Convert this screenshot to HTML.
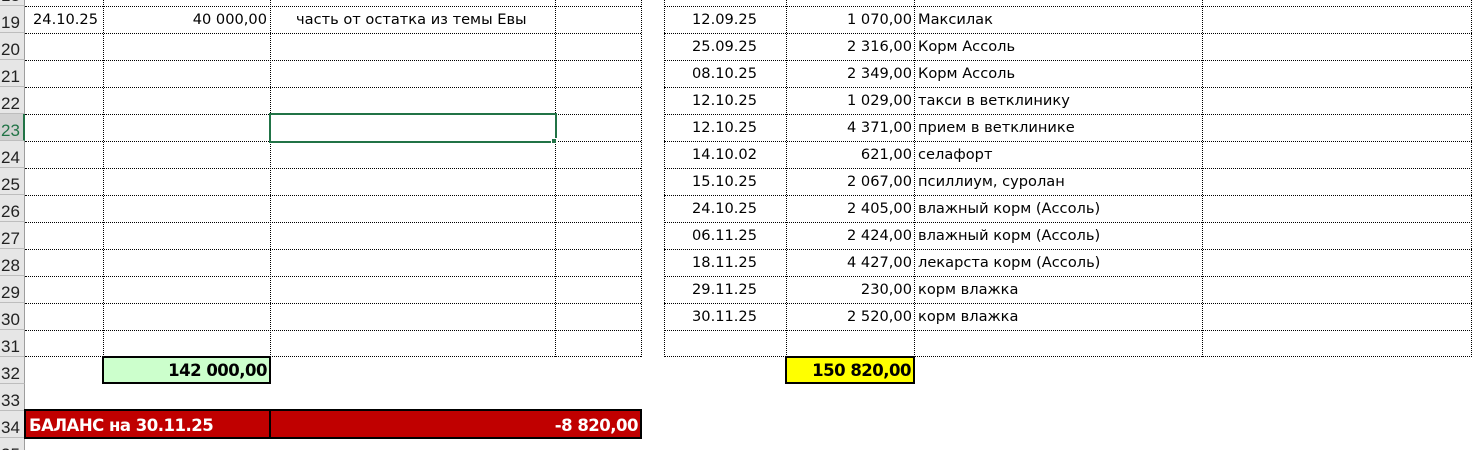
<!DOCTYPE html>
<html><head><meta charset="utf-8"><style>
html,body{margin:0;width:1482px;height:450px;overflow:hidden}
body{background:#fff;position:relative;font-family:"DejaVu Sans","Liberation Sans",sans-serif;font-size:14.6px;color:#000}
div{position:absolute;box-sizing:border-box}
.h{height:0;border-top:1px dotted #000}
.v{width:0;border-left:1px dotted #000}
.rh{left:0;width:25px;height:27px;background:#e6e6e6;border-bottom:1px solid #bdbdbd;border-right:1px solid #9e9e9e;font-family:"Liberation Sans",sans-serif;font-size:17px;color:#222;padding-left:1px;padding-top:6px;line-height:22px}
.t{height:27px;line-height:27px;white-space:nowrap}
.r{text-align:right}
.b{font-weight:bold;font-size:16.5px;font-family:"DejaVu Sans",sans-serif;letter-spacing:-0.5px}
</style></head><body>
<div class="rh" style="top:-21px">18</div>
<div class="rh" style="top:6px">19</div>
<div class="rh" style="top:33px">20</div>
<div class="rh" style="top:60px">21</div>
<div class="rh" style="top:87px">22</div>
<div class="rh" style="top:114px;background:#d2d2d2;color:#217346;border-right:2px solid #217346">23</div>
<div class="rh" style="top:141px">24</div>
<div class="rh" style="top:168px">25</div>
<div class="rh" style="top:195px">26</div>
<div class="rh" style="top:222px">27</div>
<div class="rh" style="top:249px">28</div>
<div class="rh" style="top:276px">29</div>
<div class="rh" style="top:303px">30</div>
<div class="rh" style="top:330px">31</div>
<div class="rh" style="top:357px">32</div>
<div class="rh" style="top:384px">33</div>
<div class="rh" style="top:411px">34</div>
<div class="rh" style="top:438px">35</div>

<div class="h" style="left:25px;width:616px;top:6px"></div>
<div class="h" style="left:25px;width:616px;top:33px"></div>
<div class="h" style="left:25px;width:616px;top:60px"></div>
<div class="h" style="left:25px;width:616px;top:87px"></div>
<div class="h" style="left:25px;width:616px;top:114px"></div>
<div class="h" style="left:25px;width:616px;top:141px"></div>
<div class="h" style="left:25px;width:616px;top:168px"></div>
<div class="h" style="left:25px;width:616px;top:195px"></div>
<div class="h" style="left:25px;width:616px;top:222px"></div>
<div class="h" style="left:25px;width:616px;top:249px"></div>
<div class="h" style="left:25px;width:616px;top:276px"></div>
<div class="h" style="left:25px;width:616px;top:303px"></div>
<div class="h" style="left:25px;width:616px;top:330px"></div>
<div class="h" style="left:25px;width:616px;top:356px"></div>
<div class="v" style="left:103px;top:0;height:357px"></div>
<div class="v" style="left:270px;top:0;height:357px"></div>
<div class="v" style="left:555px;top:0;height:357px"></div>
<div class="v" style="left:641px;top:0;height:357px"></div>

<div class="h" style="left:664px;width:808px;top:6px"></div>
<div class="h" style="left:664px;width:808px;top:33px"></div>
<div class="h" style="left:664px;width:808px;top:60px"></div>
<div class="h" style="left:664px;width:808px;top:87px"></div>
<div class="h" style="left:664px;width:808px;top:114px"></div>
<div class="h" style="left:664px;width:808px;top:141px"></div>
<div class="h" style="left:664px;width:808px;top:168px"></div>
<div class="h" style="left:664px;width:808px;top:195px"></div>
<div class="h" style="left:664px;width:808px;top:222px"></div>
<div class="h" style="left:664px;width:808px;top:249px"></div>
<div class="h" style="left:664px;width:808px;top:276px"></div>
<div class="h" style="left:664px;width:808px;top:303px"></div>
<div class="h" style="left:664px;width:808px;top:330px"></div>
<div class="h" style="left:664px;width:808px;top:356px"></div>
<div class="v" style="left:664px;top:0;height:357px"></div>
<div class="v" style="left:786px;top:0;height:357px"></div>
<div class="v" style="left:914px;top:0;height:357px"></div>
<div class="v" style="left:1202px;top:0;height:357px"></div>
<div class="v" style="left:1471px;top:0;height:357px"></div>

<div class="t" style="left:33px;top:6px">24.10.25</div>
<div class="t r" style="left:103px;width:164px;top:6px">40 000,00</div>
<div class="t" style="left:296px;top:6px">часть от остатка из темы Евы</div>

<div style="left:269px;top:113px;width:288px;height:30px;border:2px solid #217346"></div>
<div style="left:551px;top:138px;width:6px;height:6px;background:#217346;border:1px solid #fff"></div>

<div class="t" style="left:692px;top:6px">12.09.25</div>
<div class="t r" style="left:786px;width:126px;top:6px">1 070,00</div>
<div class="t" style="left:918px;top:6px">Максилак</div>
<div class="t" style="left:692px;top:33px">25.09.25</div>
<div class="t r" style="left:786px;width:126px;top:33px">2 316,00</div>
<div class="t" style="left:918px;top:33px">Корм Ассоль</div>
<div class="t" style="left:692px;top:60px">08.10.25</div>
<div class="t r" style="left:786px;width:126px;top:60px">2 349,00</div>
<div class="t" style="left:918px;top:60px">Корм Ассоль</div>
<div class="t" style="left:692px;top:87px">12.10.25</div>
<div class="t r" style="left:786px;width:126px;top:87px">1 029,00</div>
<div class="t" style="left:918px;top:87px">такси в ветклинику</div>
<div class="t" style="left:692px;top:114px">12.10.25</div>
<div class="t r" style="left:786px;width:126px;top:114px">4 371,00</div>
<div class="t" style="left:918px;top:114px">прием в ветклинике</div>
<div class="t" style="left:692px;top:141px">14.10.02</div>
<div class="t r" style="left:786px;width:126px;top:141px">621,00</div>
<div class="t" style="left:918px;top:141px">селафорт</div>
<div class="t" style="left:692px;top:168px">15.10.25</div>
<div class="t r" style="left:786px;width:126px;top:168px">2 067,00</div>
<div class="t" style="left:918px;top:168px">псиллиум, суролан</div>
<div class="t" style="left:692px;top:195px">24.10.25</div>
<div class="t r" style="left:786px;width:126px;top:195px">2 405,00</div>
<div class="t" style="left:918px;top:195px">влажный корм (Ассоль)</div>
<div class="t" style="left:692px;top:222px">06.11.25</div>
<div class="t r" style="left:786px;width:126px;top:222px">2 424,00</div>
<div class="t" style="left:918px;top:222px">влажный корм (Ассоль)</div>
<div class="t" style="left:692px;top:249px">18.11.25</div>
<div class="t r" style="left:786px;width:126px;top:249px">4 427,00</div>
<div class="t" style="left:918px;top:249px">лекарста корм (Ассоль)</div>
<div class="t" style="left:692px;top:276px">29.11.25</div>
<div class="t r" style="left:786px;width:126px;top:276px">230,00</div>
<div class="t" style="left:918px;top:276px">корм влажка</div>
<div class="t" style="left:692px;top:303px">30.11.25</div>
<div class="t r" style="left:786px;width:126px;top:303px">2 520,00</div>
<div class="t" style="left:918px;top:303px">корм влажка</div>

<div class="t r b" style="left:102px;top:356px;width:169px;height:28px;background:#ccffcc;border:2px solid #000;padding-right:2px;line-height:26px">142 000,00</div>
<div class="t r b" style="left:785px;top:356px;width:130px;height:28px;background:#ffff00;border:2px solid #000;padding-right:2px;line-height:26px">150 820,00</div>

<div style="left:24px;top:409px;width:618px;height:30px;background:#c00000;border:2px solid #000"></div>
<div style="left:269px;top:409px;width:2px;height:30px;background:#000"></div>
<div class="t b" style="left:29px;top:411px;color:#fff;line-height:29px">БАЛАНС на 30.11.25</div>
<div class="t r b" style="left:271px;top:411px;width:367px;color:#fff;line-height:29px">-8 820,00</div>
</body></html>
